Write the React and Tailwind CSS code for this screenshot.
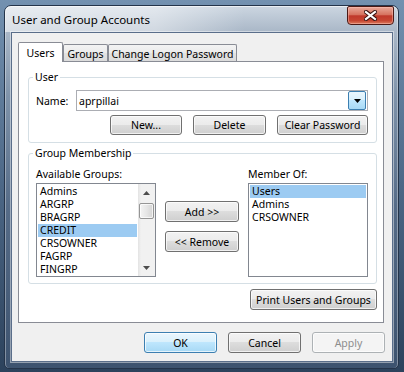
import React from 'react';

const available = ['Admins', 'ARGRP', 'BRAGRP', 'CREDIT', 'CRSOWNER', 'FAGRP', 'FINGRP'];
const members = ['Users', 'Admins', 'CRSOWNER'];

const Button = ({ children, className = '', variant = 'normal' }) => {
  const look =
    variant === 'default'
      ? 'border-[#3c7fb1] bg-[linear-gradient(to_bottom,#eaf6fd_0%,#d9f0fc_49%,#bee6fd_50%,#a7d9f5_100%)] text-black'
      : variant === 'disabled'
      ? 'border-[#adb2b5] bg-[#f4f4f4] text-[#8d8d8d]'
      : 'border-[#707070] bg-[linear-gradient(to_bottom,#f2f2f2_0%,#ebebeb_49%,#dddddd_50%,#cfcfcf_100%)] text-black';
  return (
    <div
      className={`flex items-center justify-center rounded-[3px] border shadow-[inset_0_0_0_1px_rgba(255,255,255,0.7)] ${look} ${className}`}
    >
      {children}
    </div>
  );
};

const GroupBox = ({ label, className = '', children }) => (
  <div className={`relative rounded-[3px] border border-[#d5dfe5] ${className}`}>
    <span className="absolute -top-[8px] left-[4px] bg-white px-[2px] leading-[14px]">{label}</span>
    {children}
  </div>
);

const Arrow = ({ down }) => (
  <svg width="7" height="4" viewBox="0 0 7 4">
    <polygon points={down ? '0,0 7,0 3.5,4' : '0,4 7,4 3.5,0'} fill="#4d4d4d" />
  </svg>
);

const ListBox = ({ items, selected, scroll, className = '' }) => (
  <div className={`flex h-[94px] border border-[#828790] bg-white ${className}`}>
    <div className="flex-1 overflow-hidden px-[1px] pt-[1px]">
      {items.map((item) => (
        <div
          key={item}
          className={`h-[13px] pl-[2px] leading-[13px] whitespace-nowrap ${item === selected ? 'bg-[#9ccbf2]' : ''}`}
        >
          {item}
        </div>
      ))}
    </div>
    {scroll && (
      <div className="flex w-[17px] flex-col bg-[linear-gradient(to_right,#e3e3e3_0px,#f1f1f1_3px,#f1f1f1_100%)]">
        <div className="flex h-[17px] items-center justify-center">
          <Arrow />
        </div>
        <div className="flex-1 pt-[2px]">
          <div className="mx-[1px] h-[16px] rounded-[2px] border border-[#959595] bg-[linear-gradient(to_right,#f4f4f4_0%,#e6e6e6_50%,#d4d4d4_100%)] shadow-[inset_0_0_0_1px_rgba(255,255,255,0.7)]" />
        </div>
        <div className="flex h-[17px] items-center justify-center">
          <Arrow down />
        </div>
      </div>
    )}
  </div>
);

export default function App() {
  return (
    <div className="h-[372px] w-[404px] overflow-hidden bg-[linear-gradient(to_bottom,#7391b0_0%,#4c6786_50%,#2c425c_100%)] pl-[4px] pt-[5px] font-['Noto_Sans',sans-serif] text-[10.5px] leading-[14px] text-black">
      {/* Window */}
      <div className="relative flex h-[364px] w-[395px] flex-col rounded-b-[5px] rounded-t-[7px] border border-[#24344a] bg-[linear-gradient(to_bottom,#ccd6e1_0px,#a9b7c7_26px,#7f93aa_90px,#566c88_200px,#3d536f_100%)] shadow-[inset_0_1px_0_rgba(255,255,255,0.6),inset_1px_0_0_rgba(255,255,255,0.35),inset_-1px_0_0_rgba(255,255,255,0.35)]">
        {/* Title bar */}
        <div className="flex h-[26px] items-center rounded-t-[6px] bg-[linear-gradient(to_right,rgba(255,255,255,0.55)_0px,rgba(255,255,255,0.45)_150px,rgba(255,255,255,0)_240px)] pl-[7px] pt-[2px] text-[11.5px]">
          User and Group Accounts
        </div>
        <div className="absolute right-[4px] top-0 flex h-[19px] w-[47px] items-center justify-center rounded-b-[4px] rounded-t-[2px] border border-[#4b1a16] bg-[linear-gradient(to_bottom,#e9a99a_0%,#d6735f_45%,#c0392b_52%,#c64632_80%,#dc7d5f_100%)] shadow-[inset_0_0_0_1px_rgba(255,200,190,0.45)]">
          <svg width="13" height="11" viewBox="0 0 13 11">
            <path d="M2 2 L11 9 M11 2 L2 9" stroke="#3a1210" strokeWidth="4.2" strokeLinecap="square" />
            <path d="M2 2 L11 9 M11 2 L2 9" stroke="#ffffff" strokeWidth="2.2" strokeLinecap="square" />
          </svg>
        </div>

        {/* Client area */}
        <div className="ml-[6px] flex h-[330px] w-[382px] flex-col border border-[#5a6e8a] bg-[#f0f0f0] shadow-[0_0_0_1px_rgba(255,255,255,0.45)]">
          {/* Tabs */}
          <div className="ml-[6px] mt-[9px] flex h-[19px] items-end">
            <div className="relative z-10 -mb-px flex h-[20px] w-[45px] items-center justify-center rounded-t-[2px] border border-b-0 border-[#898c95] bg-white">
              Users
            </div>
            <div className="flex h-[17px] w-[45px] items-center justify-center rounded-t-[2px] border border-b-0 border-[#898c95] bg-[linear-gradient(to_bottom,#f3f3f3_0%,#ebebeb_50%,#e2e2e2_51%,#dbdbdb_100%)] pt-[2px]">
              Groups
            </div>
            <div className="flex h-[17px] w-[129px] items-center justify-center rounded-t-[2px] border border-b-0 border-[#898c95] bg-[linear-gradient(to_bottom,#f3f3f3_0%,#ebebeb_50%,#e2e2e2_51%,#dbdbdb_100%)] pt-[2px]">
              Change Logon Password
            </div>
          </div>

          {/* Tab panel */}
          <div className="ml-[6px] flex h-[262px] w-[366px] flex-col border border-[#898c95] bg-white">
            <GroupBox label="User" className="ml-[9px] mt-[15px] w-[349px] pb-[7px] pl-[7px] pr-[8px] pt-[12px]">
              <div className="flex h-[21px] items-center">
                <span className="w-[40px]">Name:</span>
                <div className="flex h-[21px] w-[292px] items-center border border-[#abadb3] bg-white pl-[2px]">
                  <span className="flex-1">aprpillai</span>
                  <div className="mr-[1px] flex h-[19px] w-[18px] items-center justify-center rounded-[2px] border border-[#3c7fb1] bg-[linear-gradient(to_bottom,#eaf6fd_0%,#d9f0fc_49%,#bee6fd_50%,#a7d9f5_100%)]">
                    <svg width="7" height="4" viewBox="0 0 7 4">
                      <polygon points="0,0 7,0 3.5,4" fill="#000" />
                    </svg>
                  </div>
                </div>
              </div>
              <div className="mt-[4px] flex justify-end gap-[11px]">
                <Button className="h-[20px] w-[72px]">New...</Button>
                <Button className="h-[20px] w-[73px]">Delete</Button>
                <Button className="h-[20px] w-[91px]">Clear Password</Button>
              </div>
            </GroupBox>

            <GroupBox label="Group Membership" className="ml-[9px] mt-[10px] flex w-[349px] gap-[9px] pb-[6px] pl-[7px] pr-[8px] pt-[13px]">
              <div className="w-[120px]">
                <div>Available Groups:</div>
                <ListBox items={available} selected="CREDIT" scroll className="mt-[2px]" />
              </div>
              <div className="flex w-[74px] flex-col gap-[9px] pt-[34px]">
                <Button className="h-[21px]">Add &gt;&gt;</Button>
                <Button className="h-[21px]">&lt;&lt; Remove</Button>
              </div>
              <div className="w-[120px]">
                <div>Member Of:</div>
                <ListBox items={members} selected="Users" className="mt-[2px]" />
              </div>
            </GroupBox>

            <Button className="mr-[6px] mt-[5px] h-[21px] w-[127px] self-end">Print Users and Groups</Button>
          </div>

          {/* Dialog buttons */}
          <div className="mt-[9px] flex justify-end gap-[11px] pr-[7px]">
            <Button variant="default" className="h-[21px] w-[73px]">OK</Button>
            <Button className="h-[21px] w-[73px]">Cancel</Button>
            <Button variant="disabled" className="h-[21px] w-[73px]">Apply</Button>
          </div>
        </div>
      </div>
    </div>
  );
}
